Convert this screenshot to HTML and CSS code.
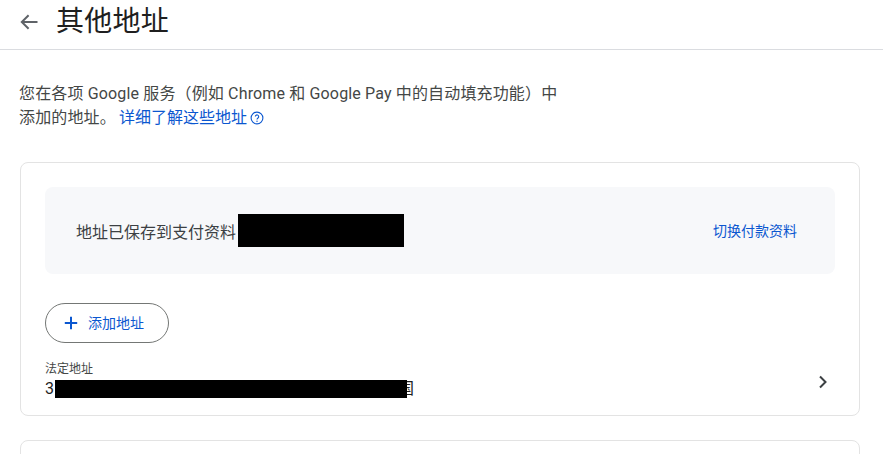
FILE: index.html
```html
<!DOCTYPE html>
<html lang="zh-CN">
<head>
<meta charset="utf-8">
<title>其他地址</title>
<link rel="stylesheet" href="styles.css">
</head>
<body>
<header class="topbar">
  <svg class="back" viewBox="0 0 18 16" width="18" height="16"><path d="M17.5 8H2.5M8.6 1.2 1.8 8l6.8 6.8" fill="none" stroke="#5f6368" stroke-width="2"/></svg>
  <h1 class="title">其他地址</h1>
</header>
<main class="content">
  <p class="intro">您在各项 Google 服务（例如 Chrome 和 Google Pay 中的自动填充功能）中<br>添加的地址。<a class="learn" href="#">详细了解这些地址<svg class="help" viewBox="0 0 14 14" width="14" height="14"><circle cx="7" cy="7" r="5.9" fill="none" stroke="#0b57d0" stroke-width="1.1"/><path d="M5.3 5.6a1.7 1.7 0 1 1 2.7 1.4c-.7.5-1 .8-1 1.6" fill="none" stroke="#0b57d0" stroke-width="1.1"/><circle cx="7" cy="10.3" r=".7" fill="#0b57d0"/></svg></a></p>
  <section class="card">
    <div class="profile">
      <div class="profile-name"><span class="saved">地址已保存到支付资料</span><span class="redact-name"></span></div>
      <a class="switch" href="#">切换付款资料</a>
    </div>
    <button class="add" type="button"><svg viewBox="0 0 14 14" width="14" height="14"><path d="M7 .8v12.4M.8 7h12.4" fill="none" stroke="#0b57d0" stroke-width="2"/></svg><span class="add-text">添加地址</span></button>
    <div class="row">
      <div class="address">
        <div class="label">法定地址</div>
        <div class="value">3<span class="redact-addr"></span><span class="tail">国</span></div>
      </div>
      <svg class="chev" viewBox="0 0 10 14" width="10" height="14"><path d="M2 1.5 7.5 7 2 12.5" fill="none" stroke="#3c4043" stroke-width="2"/></svg>
    </div>
  </section>
  <section class="card next"></section>
</main>
</body>
</html>
```
FILE: styles.css
```css
* { box-sizing: border-box; }
html, body { margin: 0; height: 100%; overflow: hidden; background: #fff; }
body { font-family: Roboto, "Noto Sans CJK SC", "Noto Sans", sans-serif; color: #1f1f1f; }
.topbar { height: 50px; border-bottom: 1px solid #dadce0; display: flex; align-items: flex-start; padding: 14px 0 0 20px; }
.back { flex: none; }
.title { margin: -10px 0 0 18px; font-size: 28px; line-height: 36px; font-weight: 400; letter-spacing: .25px; color: #1f1f1f; }
.content { padding: 0 23px 0 20px; }
.intro { margin: 32px 0 32px -1px; width: 570px; font-size: 16px; line-height: 24px; letter-spacing: .15px; color: #444746; }
.learn { color: #0b57d0; text-decoration: none; margin-left: 3px; letter-spacing: 0; }
.help { margin-left: 3px; vertical-align: -2px; }
.card { border: 1px solid #e3e3e3; border-radius: 8px; padding: 24px; height: 254px; background: #fff; }
.card.next { margin-top: 24px; height: 60px; }
.profile { height: 87px; background: #f7f8fa; border-radius: 8px; display: flex; align-items: center; justify-content: space-between; padding: 0 38px 0 32px; }
.profile-name { display: flex; align-items: center; font-size: 16px; color: #3c4043; margin-left: -1px; }
.saved { width: 162px; white-space: nowrap; }
.redact-name { width: 166px; height: 33px; background: #000; }
.switch { font-size: 14px; color: #0b57d0; text-decoration: none; margin-bottom: 2px; }
.add { margin-top: 29px; display: flex; align-items: center; gap: 10px; width: 124px; height: 40px; padding: 0 0 0 18px; border: 1px solid #747775; border-radius: 20px; background: #fff; color: #0b57d0; font: inherit; font-size: 14px; }
.add-text { margin-bottom: 2px; }
.row { margin-top: 18px; display: flex; align-items: center; justify-content: space-between; padding-right: 7px; }
.label { font-size: 12px; line-height: 17px; color: #444746; }
.value { display: flex; align-items: center; font-size: 16px; line-height: 21px; height: 21px; color: #1f1f1f; }
.redact-addr { width: 352px; height: 18px; background: #000; margin-left: 1px; position: relative; z-index: 1; }
.tail { margin-left: -9px; }
.chev { flex: none; margin-top: 3px; }
```
